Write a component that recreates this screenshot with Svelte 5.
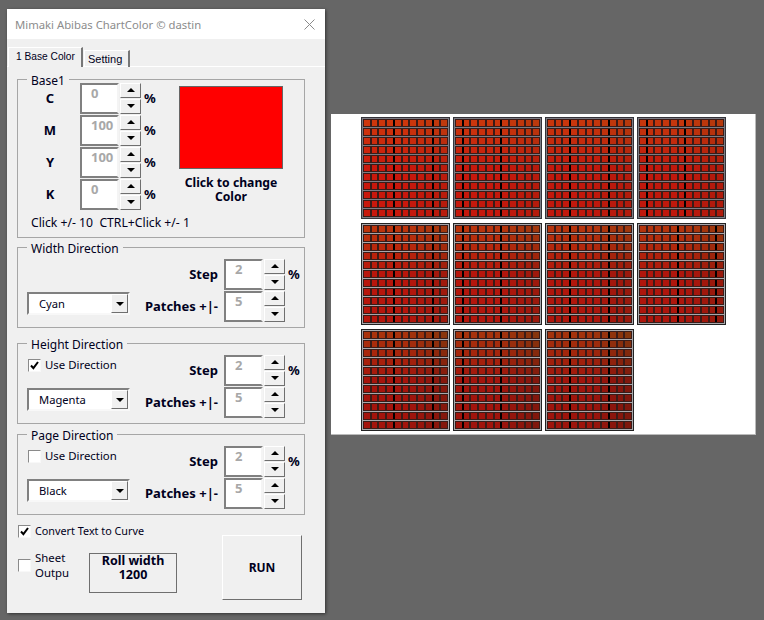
<script>
  const baseRows = [
    { label: 'C', value: '0' },
    { label: 'M', value: '100' },
    { label: 'Y', value: '100' },
    { label: 'K', value: '0' }
  ]
  const directions = [
    { title: 'Width Direction', combo: 'Cyan', check: null },
    { title: 'Height Direction', combo: 'Magenta', check: true },
    { title: 'Page Direction', combo: 'Black', check: false }
  ]

  const rows = [...Array(11).keys()]
  const tiles = [...Array(11).keys()]

  // the column gaps that print as heavy black bars, per tile
  const heavyGaps = [[3, 8], [0, 5], [2, 7], [0, 5], [3, 8], [0, 5], [2, 7], [4, 9], [3, 8], [0, 5], [2, 7]]

  // patches drift from orange-red at the top to deep red below, darker on later pages
  function patchColor(tile, row, col) {
    const y = Math.min(row / 5, 1)
    const x = Math.max(col - 5, 0) / 5
    const page = Math.floor(tile / 4)
    const step = tile % 4
    const r = 206 - page * 18 - step * 3 - x * (16 + page * 8) - (row / 10) * 6
    const g = 54 - y * 30 + x * 3 - page * 2
    const b = 12
    return `rgb(${r | 0},${g | 0},${b})`
  }
</script>

{#snippet spin()}
  <div class="spin">
    <button class="spin-btn" aria-label="up"><span class="tri up"></span></button>
    <button class="spin-btn" aria-label="down"><span class="tri down"></span></button>
  </div>
{/snippet}

{#snippet checkbox(on)}
  <span class="box">
    {#if on}
      <svg width="9" height="9" viewBox="0 0 9 9"><path d="M1 4.5 L3.4 7.2 L8 1" fill="none" stroke="#000" stroke-width="2" /></svg>
    {/if}
  </span>
{/snippet}

<div class="desktop">
  <div class="dialog">
    <div class="titlebar">
      <span>Mimaki Abibas ChartColor © dastin</span>
      <svg class="close" width="11" height="11" viewBox="0 0 11 11"><path d="M0.5 0.5 L10.5 10.5 M10.5 0.5 L0.5 10.5" stroke="#8a8a8a" stroke-width="1" /></svg>
    </div>
    <div class="client">
      <div class="tabs">
        <div class="tab active">1 Base Color</div>
        <div class="tab">Setting</div>
      </div>

      <div class="group base">
        <span class="legend">Base1</span>
        <div class="base-rows">
          {#each baseRows as row}
            <div class="spin-row">
              <b class="letter">{row.label}</b>
              <div class="num">{row.value}</div>
              {@render spin()}
              <b class="pct">%</b>
            </div>
          {/each}
        </div>
        <div class="swatch-col">
          <div class="swatch"></div>
          <b class="swatch-label">Click to change<br />Color</b>
        </div>
        <div class="hint">Click +/- 10&nbsp; CTRL+Click +/- 1</div>
      </div>

      {#each directions as dir, i}
        <div class="group dir" class:tight={i === 1} class:last={i === 2}>
          <span class="legend">{dir.title}</span>
          <div class="dir-left">
            {#if dir.check !== null}
              <div class="check-row">{@render checkbox(dir.check)}<span>Use Direction</span></div>
            {/if}
            <div class="combo">
              <span class="combo-text">{dir.combo}</span>
              <span class="combo-btn"><span class="tri down"></span></span>
            </div>
          </div>
          <div class="dir-right">
            <div class="spin-row">
              <b class="side-label">Step</b>
              <div class="num">2</div>
              {@render spin()}
              <b class="pct">%</b>
            </div>
            <div class="spin-row">
              <b class="side-label">Patches +|-</b>
              <div class="num">5</div>
              {@render spin()}
            </div>
          </div>
        </div>
      {/each}

      <div class="footer">
        <div class="footer-left">
          <div class="check-row">{@render checkbox(true)}<span>Convert Text to Curve</span></div>
          <div class="sheet-row">
            <div class="check-row sheet">{@render checkbox(false)}<span>Sheet<br />Outpu</span></div>
            <div class="roll"><b>Roll width<br />1200</b></div>
          </div>
        </div>
        <button class="run">RUN</button>
      </div>
    </div>
  </div>

  <div class="sheet-page">
    <div class="tile-grid">
      {#each tiles as t}
        <div class="tile" class:later={t >= 4}>
          {#each rows as r}
            <div class="patch-row">
              {#each rows as c}
                <span class="patch" class:heavy={heavyGaps[t].includes(c)} style="background:{patchColor(t, r, c)}"></span>
              {/each}
            </div>
          {/each}
        </div>
      {/each}
    </div>
  </div>
</div>

<style>
  :global(body) {
    margin: 0;
    background: #666;
  }

  .desktop {
    width: 764px;
    height: 620px;
    box-sizing: border-box;
    padding: 9px 0 0 7px;
    display: flex;
    align-items: flex-start;
    gap: 6px;
    font-family: "Noto Sans", "Open Sans", sans-serif;
    font-size: 11.4px;
    color: #000020;
    overflow: hidden;
  }

  .dialog {
    width: 318px;
    height: 604px;
    flex: none;
    background: #f0f0f0;
    box-shadow: 1px 1px 3px #333;
  }

  .titlebar {
    height: 30px;
    background: #fff;
    color: #8c8c8c;
    font-size: 11.3px;
    display: flex;
    align-items: center;
    justify-content: space-between;
    padding: 0 10px 0 8px;
  }

  .client {
    padding: 8px 0 0 0;
  }

  .tabs {
    height: 19px;
    display: flex;
    align-items: flex-end;
    padding-left: 1px;
    border-bottom: 1px solid #fff;
    margin-bottom: 12px;
  }

  .tab {
    height: 16px;
    line-height: 16px;
    padding: 0 6px 0 3px;
    font-family: "Liberation Sans", sans-serif;
    font-size: 11px;
    white-space: nowrap;
    border-right: 2px solid #777;
    border-top: 1px solid #fff;
    border-left: 1px solid #fff;
    margin-bottom: -1px;
    margin-right: 1px;
  }

  .tab.active {
    width: 58px;
    height: 19px;
    line-height: 17px;
    padding: 0 7px;
    font-size: 10.2px;
    background: #f0f0f0;
  }

  .group {
    position: relative;
    box-sizing: border-box;
    width: 288px;
    margin-left: 10px;
    border: 1px solid #a6a6a6;
  }

  .legend {
    position: absolute;
    top: -7px;
    left: 9px;
    padding: 0 4px;
    background: #f0f0f0;
    font-size: 12px;
    line-height: 16px;
  }

  .base {
    height: 159px;
    margin-bottom: 9px;
    display: grid;
    grid-template-columns: 160px 1fr;
    grid-template-rows: 128px 1fr;
    padding-top: 2px;
  }

  .spin-row {
    display: flex;
    align-items: center;
    height: 32px;
  }

  .letter {
    width: 44px;
    margin: 0 8px 0 10px;
    text-align: center;
    font-size: 13px;
  }

  .num {
    width: 39px;
    height: 31px;
    box-sizing: border-box;
    background: #fff;
    border: 2px solid;
    border-color: #808080 #f4f4f4 #808080 #808080;
    color: #a8a8a8;
    font-weight: 700;
    font-size: 13px;
    line-height: 13px;
    padding: 2px 0 0 9px;
  }

  .spin {
    width: 21px;
    margin-left: 1px;
    display: flex;
    flex-direction: column;
    gap: 1px;
  }

  .spin-btn {
    height: 15px;
    padding: 0;
    box-sizing: border-box;
    background: #f0f0f0;
    border: 1px solid;
    border-color: #fff #6f6f6f #6f6f6f #fff;
    display: flex;
    align-items: center;
    justify-content: center;
  }

  .tri {
    width: 0;
    height: 0;
    border-left: 4px solid transparent;
    border-right: 4px solid transparent;
  }

  .tri.up {
    border-bottom: 4px solid #000;
  }

  .tri.down {
    border-top: 4px solid #000;
  }

  .pct {
    margin-left: 3px;
    font-size: 13px;
  }

  .swatch-col {
    padding: 4px 0 0 0;
    width: 104px;
    margin-left: 1px;
    text-align: center;
  }

  .swatch {
    height: 83px;
    box-sizing: border-box;
    background: #f00;
    border: 1px solid #666;
    margin-bottom: 7px;
  }

  .swatch-label {
    display: block;
    font-size: 12.2px;
    line-height: 14px;
  }

  .hint {
    grid-column: 1 / -1;
    padding: 5px 0 0 13px;
    font-size: 12.2px;
    line-height: 16px;
  }

  .dir {
    height: 81px;
    margin-bottom: 15px;
    display: flex;
    padding: 10px 0 0 9px;
  }

  .dir.tight {
    margin-bottom: 10px;
  }

  .dir.last {
    margin-bottom: 9px;
  }

  .dir-left {
    width: 103px;
    height: 57px;
    display: flex;
    flex-direction: column;
  }

  .dir-right {
    margin-left: 14px;
  }

  .side-label {
    width: 74px;
    text-align: right;
    margin-right: 6px;
    font-size: 13px;
    white-space: nowrap;
  }

  .check-row {
    display: flex;
    align-items: center;
    gap: 4px;
    line-height: 14px;
  }

  .dir .check-row {
    margin: 4px 0 0 1px;
  }

  .box {
    width: 13px;
    height: 13px;
    flex: none;
    box-sizing: border-box;
    background: #fff;
    border: 1px solid;
    border-color: #8a8a8a #f8f8f8 #f8f8f8 #8a8a8a;
    display: flex;
    align-items: center;
    justify-content: center;
  }

  .combo {
    margin-top: auto;
    height: 23px;
    width: 103px;
    box-sizing: border-box;
    background: #fff;
    border: 2px solid;
    border-color: #808080 #f8f8f8 #f8f8f8 #808080;
    display: flex;
    justify-content: space-between;
    align-items: stretch;
    font-size: 11.2px;
  }

  .combo-text {
    padding-left: 10px;
    line-height: 19px;
  }

  .combo-btn {
    width: 17px;
    box-sizing: border-box;
    background: #f0f0f0;
    border: 1px solid;
    border-color: #fff #6f6f6f #6f6f6f #fff;
    display: flex;
    align-items: center;
    justify-content: center;
  }

  .footer {
    display: flex;
    justify-content: space-between;
    width: 284px;
    margin-left: 11px;
    font-size: 10.8px;
  }

  .sheet-row {
    display: flex;
    align-items: flex-start;
    gap: 19px;
    margin-top: 13px;
  }

  .sheet {
    width: 52px;
    white-space: nowrap;
    line-height: 14.5px;
    font-size: 11.4px;
  }

  .roll {
    width: 88px;
    height: 40px;
    margin-top: 2px;
    box-sizing: border-box;
    border: 1px solid #6f6f6f;
    text-align: center;
    font-size: 12.5px;
    line-height: 14px;
  }

  .run {
    width: 80px;
    height: 65px;
    margin-top: 11px;
    box-sizing: border-box;
    background: #f0f0f0;
    border: 1px solid;
    border-color: #fff #6f6f6f #6f6f6f #fff;
    font: 700 12px "Noto Sans", sans-serif;
    color: #000020;
  }

  .sheet-page {
    width: 425px;
    height: 321px;
    flex: none;
    margin-top: 105px;
    background: #fff;
    box-sizing: border-box;
    border-right: 1px solid #bbb;
    border-bottom: 1px solid #bbb;
    padding: 3px 0 0 30px;
  }

  .tile-grid {
    display: grid;
    grid-template-columns: repeat(4, 89px);
    column-gap: 3px;
    row-gap: 4px;
  }

  .tile {
    height: 102px;
    box-sizing: border-box;
    background: #7c7c84;
    border: 1px solid #34343a;
    padding: 1px;
    display: flex;
    flex-direction: column;
    gap: 1px;
  }

  .tile.later {
    background: #a8a8ac;
    border-color: #222;
  }

  .patch-row {
    flex: 1;
    display: flex;
    background: #3a1c18;
    padding: 1px 0;
  }

  .patch {
    flex: 1;
    margin: 0 1px;
  }

  .patch.heavy {
    box-shadow: 2px 0 0 #000;
  }
</style>
